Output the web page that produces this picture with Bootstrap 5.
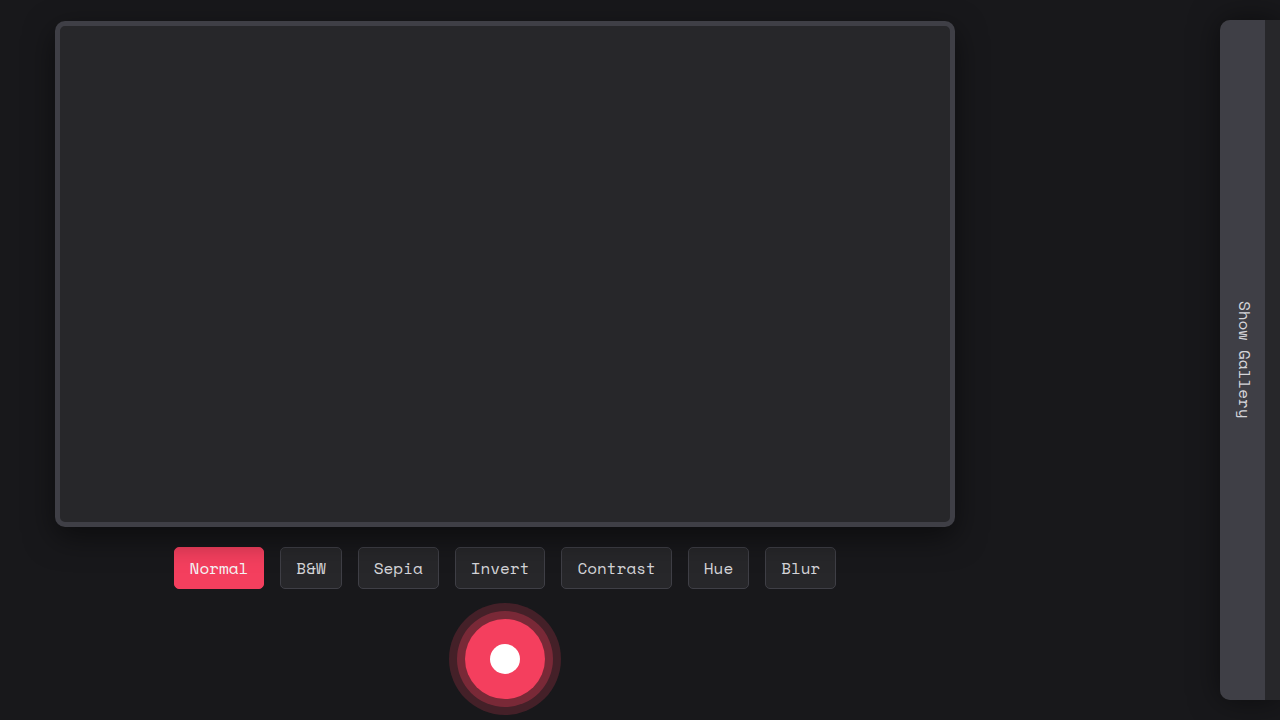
<!DOCTYPE html>
<html lang="en" data-bs-theme="dark">
<head>
<meta charset="utf-8">
<meta name="viewport" content="width=device-width, initial-scale=1">
<title>Camera</title>
<link href="https://cdn.jsdelivr.net/npm/bootstrap@5.3.0/dist/css/bootstrap.min.css" rel="stylesheet">
<style>
  body {
    background: #18181b;
    color: #d4d4d8;
    font-family: "Space Mono", "Liberation Mono", monospace;
    font-size: 16px;
    line-height: 24px;
  }
  .app { padding-left: 55px; }
  .stage { max-width: 900px; }
  .viewfinder {
    height: 506px;
    background: #27272a;
    border: 5px solid #3f3f46;
    border-radius: 10px;
    box-shadow: 0 10px 30px rgba(0, 0, 0, .5);
  }
  .filters { gap: 16px; margin: 20px 0 30px; }
  .filters .btn {
    --bs-btn-color: #d4d4d8;
    --bs-btn-bg: #27272a;
    --bs-btn-border-color: #3f3f46;
    --bs-btn-hover-color: #fff;
    --bs-btn-hover-bg: #3f3f46;
    --bs-btn-hover-border-color: #3f3f46;
    --bs-btn-active-color: #f4f4f5;
    --bs-btn-active-bg: #f43f5e;
    --bs-btn-active-border-color: #f43f5e;
    --bs-btn-padding-x: 15px;
    --bs-btn-padding-y: 8px;
    --bs-btn-border-radius: 5px;
    --bs-btn-font-size: 16px;
    --bs-btn-line-height: 24px;
  }
  .shutter {
    width: 80px;
    height: 80px;
    background: #f43f5e;
    box-shadow: 0 0 0 8px rgba(244, 63, 94, .3), 0 0 0 16px rgba(244, 63, 94, .2);
  }
  .shutter-dot { width: 30px; height: 30px; background: #fff; }
  .gallery {
    width: 60px;
    margin: 20px 0;
    background: #27272a;
    border-radius: 10px 0 0 10px;
    box-shadow: 0 0 30px rgba(0, 0, 0, .5);
  }
  .gallery-toggle {
    width: 45px;
    padding: 0 0 0 4px;
    background: #3f3f46;
    color: #d4d4d8;
    border-radius: 10px 0 0 10px;
    writing-mode: vertical-rl;
  }
</style>
</head>
<body>
<div class="app d-flex justify-content-between vh-100 overflow-hidden">
  <main class="stage flex-grow-1 d-flex flex-column align-items-center justify-content-center">
    <div class="viewfinder w-100 position-relative z-1 flex-shrink-0" role="img" aria-label="Camera preview"></div>
    <div class="filters d-flex flex-wrap justify-content-center" role="group" aria-label="Filters">
      <button type="button" class="btn active" aria-pressed="true">Normal</button>
      <button type="button" class="btn">B&amp;W</button>
      <button type="button" class="btn">Sepia</button>
      <button type="button" class="btn">Invert</button>
      <button type="button" class="btn">Contrast</button>
      <button type="button" class="btn">Hue</button>
      <button type="button" class="btn">Blur</button>
    </div>
    <button type="button" class="shutter flex-shrink-0 rounded-circle border-0 p-0 d-flex align-items-center justify-content-center" aria-label="Take photo">
      <span class="shutter-dot rounded-circle"></span>
    </button>
  </main>
  <aside class="gallery d-flex flex-shrink-0">
    <button type="button" class="gallery-toggle border-0 text-center">Show Gallery</button>
  </aside>
</div>
<script src="https://cdn.jsdelivr.net/npm/bootstrap@5.3.0/dist/js/bootstrap.bundle.min.js"></script>
</body>
</html>
